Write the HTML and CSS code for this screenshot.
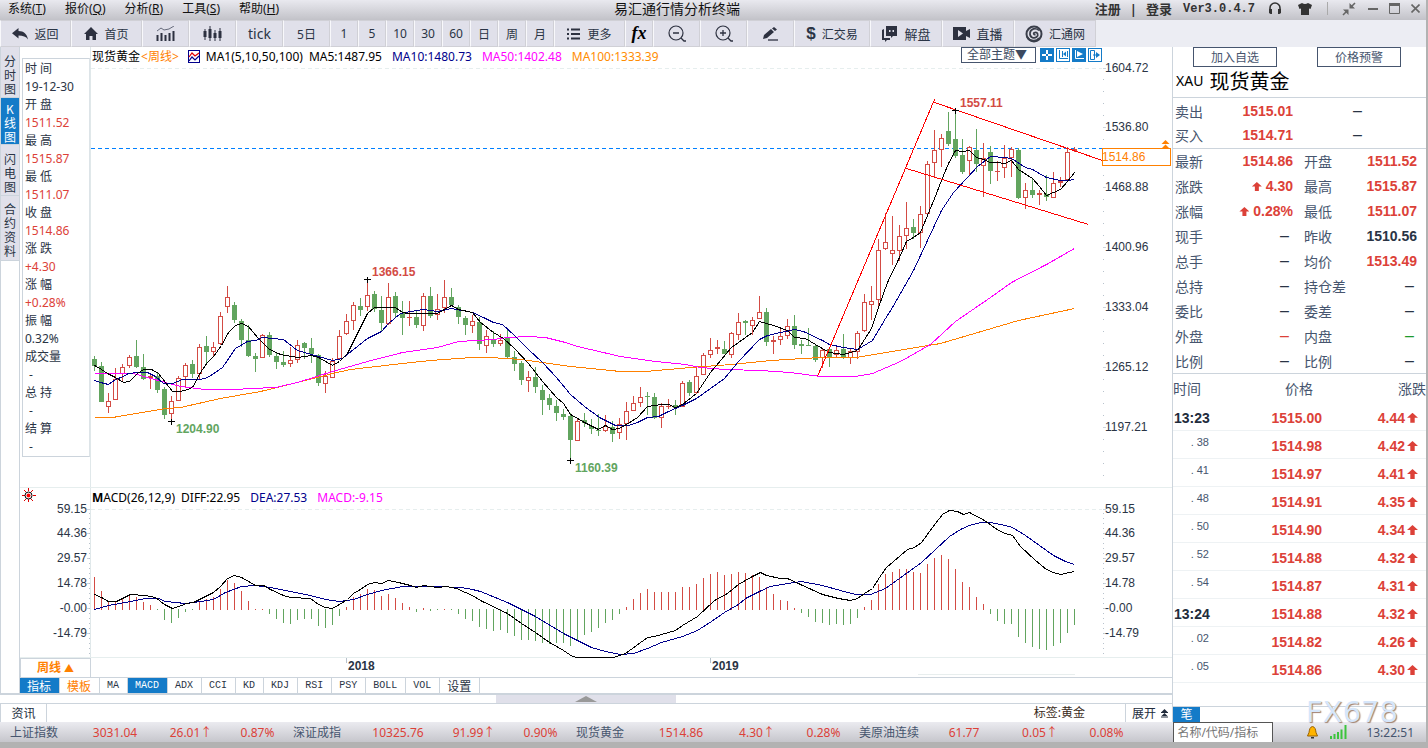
FILE: index.html
```html
<!DOCTYPE html>
<html lang="zh-CN">
<head>
<meta charset="utf-8">
<title>易汇通行情分析终端</title>
<link rel="stylesheet" href="styles.css">
</head>
<body>
<div class="app">
  <header class="titlebar">
    <nav class="menu">
      <button type="button">系统(<u>T</u>)</button>
      <button type="button">报价(<u>Q</u>)</button>
      <button type="button">分析(<u>R</u>)</button>
      <button type="button">工具(<u>S</u>)</button>
      <button type="button">帮助(<u>H</u>)</button>
    </nav>
    <h1>易汇通行情分析终端</h1>
    <div class="account">
      <a href="#">注册</a><span class="bar">|</span><a href="#">登录</a><span class="version">Ver3.0.4.7</span>
      <button type="button" aria-label="客服"><svg width="14" height="13" viewBox="0 0 14 13"><path d="M2 10V6a5 5 0 0 1 10 0v4" fill="none" stroke="#333" stroke-width="1.6"/><path d="M1 7h3v5H2.500L1 11zM13 7h-3v5h1.500l1.500-1z" fill="#333"/></svg></button>
      <button type="button" class="shirt" aria-label="皮肤"><svg width="14" height="12" viewBox="0 0 14 12"><path d="M4 0q3 2 6 0l4 2-1.500 4-1.500-.5V12H3V5.500L1.500 6 0 2z" fill="#333"/></svg></button>
      <i class="split"></i>
      <button type="button" class="shrink" aria-label="收起"><svg width="14" height="14" viewBox="0 0 14 14"><path d="M13 1 9 5M1 13l4-4" stroke="#666" stroke-width="1.600"/><path d="M7.500 1v5.500H13zM6.500 13V7.500H1z" fill="#666"/></svg></button>
      <button type="button" aria-label="最小化"><svg width="10" height="10" viewBox="0 0 10 10"><path d="M0 5h10" stroke="#666" stroke-width="2"/></svg></button>
      <button type="button" aria-label="最大化"><svg width="11" height="11" viewBox="0 0 11 11"><path d="M0 1.500h11" stroke="#666" stroke-width="3"/><path d="M.5 1v9.500h10V1" fill="none" stroke="#666"/></svg></button>
      <button type="button" aria-label="关闭"><svg width="9" height="9" viewBox="0 0 9 9"><path d="m.5.5 8 8m0-8-8 8" stroke="#666" stroke-width="1.600"/></svg></button>
    </div>
  </header>

  <div class="toolbar">
    <button type="button" class="w71"><svg width="16" height="12" viewBox="0 0 16 12"><path d="M6.500 0v3C12 3 15 6 16 11.500 14 8.500 11 7.500 6.500 7.500v3L0 5.200z" fill="#2d3140"/></svg>返回</button>
    <button type="button" class="w71"><svg width="14" height="13" viewBox="0 0 14 13"><path d="m7 0 7 7h-2v6H8.500V9h-3v4H2V7H0z" fill="#2d3140"/></svg>首页</button>
    <button type="button" class="w47" aria-label="走势"><svg width="19" height="16" viewBox="0 0 19 16"><path d="m1 5 4-3 3 2 5-1 5-3" fill="none" stroke="#666b7c"/><path d="M1.500 9v6M5.500 7v8M9.500 9v6M13.500 7v8M17.500 5v10" stroke="#2d3140" stroke-width="2"/></svg></button>
    <button type="button" class="w47" aria-label="K线"><svg width="19" height="16" viewBox="0 0 19 16"><path d="M2 3v11M7 0v15M12 4v11M17 2v13" stroke="#2d3140"/><path d="M.5 5h3v6h-3zM5.500 3h3v9h-3zM10.500 7h3v5h-3zM15.500 5h3v7h-3z" fill="#2d3140"/></svg></button>
    <button type="button" class="w47 tick">tick</button>
    <button type="button" class="w47">5日</button>
    <button type="button" class="w28">1</button>
    <button type="button" class="w28">5</button>
    <button type="button" class="w28">10</button>
    <button type="button" class="w28">30</button>
    <button type="button" class="w28">60</button>
    <button type="button" class="w28">日</button>
    <button type="button" class="w28">周</button>
    <button type="button" class="w28">月</button>
    <button type="button" class="w71 wide"><svg width="13" height="12" viewBox="0 0 13 12"><path d="M0 1.500h2M4 1.500h9M0 6h2M4 6h9M0 10.500h2M4 10.500h9" stroke="#2d3140" stroke-width="2"/></svg>更多</button>
    <button type="button" class="w28 fx">fx</button>
    <button type="button" class="w47" aria-label="缩小"><svg width="18" height="18" viewBox="0 0 18 18"><circle cx="8" cy="8" r="7" fill="none" stroke="#2d3140" stroke-width="1.200"/><path d="M5 8h6M13 13l3 3h2" fill="none" stroke="#2d3140" stroke-width="1.300"/></svg></button>
    <button type="button" class="w47" aria-label="放大"><svg width="18" height="18" viewBox="0 0 18 18"><circle cx="8" cy="8" r="7" fill="none" stroke="#2d3140" stroke-width="1.200"/><path d="M5 8h6M8 5v6M13 13l3 3h2" fill="none" stroke="#2d3140" stroke-width="1.300"/></svg></button>
    <button type="button" class="w47" aria-label="画线"><svg width="17" height="14" viewBox="0 0 17 14"><path d="m1 12 1-4 7-6 3 3-7 6zM10 1.500 12 0l3 2.500L13 4z" fill="#2d3140"/><path d="M6 13h10" stroke="#2d3140" stroke-width="1.300"/></svg></button>
    <button type="button" class="w76"><b class="dollar">$</b>汇交易</button>
    <button type="button" class="w72"><svg width="17" height="16" viewBox="0 0 17 16"><path d="M5 0h11v10h-4l-2 2V10H5z" fill="#2d3140"/><path d="M3 3v9h6v2H6l-2 2v-2H1V4z" fill="#2d3140"/><path d="M8 4h1.500v2H8zM11.500 4H13v2h-1.500z" fill="#e0e0ea"/></svg>解盘</button>
    <button type="button" class="w72"><svg width="17" height="13" viewBox="0 0 17 13"><path d="M0 0h13v4l4-2v9l-4-2v4H0z" fill="#2d3140"/><path d="m5 3 5 3.500L5 10z" fill="#e0e0ea"/></svg>直播</button>
    <button type="button" class="w82"><svg width="18" height="18" viewBox="0 0 18 18"><circle cx="9" cy="9" r="7.500" fill="none" stroke="#3a3e4a" stroke-width="2"/><path d="M14 5.500C11 2.500 5.500 3.500 5 8s4 6 6.500 4 1-5-1.500-4.500-1 2.500.5 2M2 12c3 4.500 9.500 5 12 1" fill="none" stroke="#3a3e4a" stroke-width="1.700"/></svg>汇通网</button>
  </div>

  <main class="main">
    <div class="left">
      <div class="work">
        <nav class="views">
          <button type="button">分<br>时<br>图</button>
          <button type="button" class="on">K<br>线<br>图</button>
          <button type="button">闪<br>电<br>图</button>
          <button type="button" class="long">合<br>约<br>资<br>料</button>
        </nav>
        <div class="desk">
          <section class="pane">
            <div class="gutter">
              <dl class="info">
                <dt>时 间</dt><dd>19-12-30</dd>
                <dt>开 盘</dt><dd class="up">1511.52</dd>
                <dt>最 高</dt><dd class="up">1515.87</dd>
                <dt>最 低</dt><dd class="up">1511.07</dd>
                <dt>收 盘</dt><dd class="up">1514.86</dd>
                <dt>涨 跌</dt><dd class="up">+4.30</dd>
                <dt>涨 幅</dt><dd class="up">+0.28%</dd>
                <dt>振 幅</dt><dd>0.32%</dd>
                <dt>成交量</dt><dd class="none">-</dd>
                <dt>总 持</dt><dd class="none">-</dd>
                <dt>结 算</dt><dd class="none">-</dd>
              </dl>
            </div>
            <div class="plot">
              <div class="legend">
                <span class="name">现货黄金<em>&lt;周线&gt;</em></span>
                <svg class="mark" width="12" height="13" viewBox="0 0 12 13"><rect x=".5" y=".5" width="11" height="12" fill="#fff" stroke="#00008b"/><path d="m1 7 3-4 3 3 4-3" fill="none" stroke="#e00000" stroke-width="1.200"/><path d="m1 11 3-4 3 3 4-4" fill="none" stroke="#00008b" stroke-width="1.200"/></svg>
                <span>MA1(5,10,50,100)</span><span class="first">MA5:1487.95</span><span class="navy">MA10:1480.73</span><span class="pink">MA50:1402.48</span><span class="amber">MA100:1333.39</span>
                <div class="themes">
                  <select aria-label="主题"><option>全部主题▼</option></select>
                  <button type="button" class="solid" aria-label="十字"><svg viewBox="0 0 12 12"><path d="M6 1v4M6 7v4M1 6h4M7 6h4" stroke="#fff" stroke-width="2"/></svg></button>
                  <button type="button" aria-label="压缩"><svg viewBox="0 0 12 12"><path d="M2.500 1v8.500H11M5.500 2v6M10.500 2v6" fill="none" stroke="#147bc8"/><path d="m6 5 3-2.500v5z" fill="#147bc8"/></svg></button>
                  <button type="button" class="solid" aria-label="播放"><svg viewBox="0 0 12 12"><path d="M2.500 1v8.500H11" fill="none" stroke="#fff"/><path d="m4 2 6 3-6 3z" fill="#fff"/></svg></button>
                  <button type="button" aria-label="导出"><svg viewBox="0 0 12 12"><path d="M1.500 1.500h4v9h-4zM4 6h6" fill="none" stroke="#147bc8"/><path d="m7 3 4 3-4 3z" fill="#147bc8"/></svg></button>
                </div>
              </div>
              <svg class="price" viewBox="91 67 1081 420" preserveAspectRatio="xMinYMin meet" id="price"></svg>
            </div>
          </section>
          <section class="pane">
            <div class="gutter">
              <svg class="axis" width="70" height="170" viewBox="20 488 70 170" id="leftAxis">
                <g stroke="#e00000"><path d="M28.500 488v3M28.500 499v3M22 495.500h3M33 495.500h3M24 490l2 2M33 490l-2 2M24 501l2-2M33 501l-2-2"/></g>
                <circle cx="28.500" cy="495.500" r="3.500" fill="#fff" stroke="#000"/><circle cx="28.500" cy="495.500" r="2" fill="#f00"/>
              </svg>
            </div>
            <div class="plot">
              <div class="legend">
                <span><b>M</b>ACD(26,12,9)</span><span class="first">DIFF:22.95</span><span class="navy">DEA:27.53</span><span class="pink">MACD:-9.15</span>
              </div>
              <svg class="macd" viewBox="91 508 1081 149" preserveAspectRatio="xMinYMin meet" id="macd"></svg>
            </div>
          </section>
          <div class="timeline">
            <button type="button" class="period">周线 <span>▲</span></button>
            <svg class="years" viewBox="91 659 1081 19" preserveAspectRatio="xMinYMin meet">
              <path d="M346.500 659v5M710.500 659v5" stroke="#b8c2cc"/><path d="M918 675.500h157" stroke="#e8eeee"/>
              <text x="348" y="671">2018</text><text x="712" y="671">2019</text>
            </svg>
          </div>
          <div class="indicators">
            <button type="button" class="cn on">指标</button><button type="button" class="cn tpl">模板</button><button type="button">MA</button><button type="button" class="on">MACD</button><button type="button">ADX</button><button type="button">CCI</button><button type="button">KD</button><button type="button">KDJ</button><button type="button">RSI</button><button type="button">PSY</button><button type="button">BOLL</button><button type="button">VOL</button><button type="button" class="cn">设置</button>
          </div>
        </div>
      </div>
      <div class="drawer"><button type="button" aria-label="展开面板"><svg width="22" height="6" viewBox="0 0 22 6"><path d="M0 6 11 0l11 6z" fill="#999"/></svg></button></div>
      <div class="news">
        <button type="button" class="tab">资讯</button>
        <span class="tag">标签:黄金</span>
        <button type="button" class="expand">展开 <svg width="7" height="9" viewBox="0 0 7 9"><path d="m3.500 0 3 3h-6zM3.500 4l3 3h-6zM0 3h7v1H0zM0 7.500h7v1H0z" fill="#222c3c"/></svg></button>
      </div>
    </div>

    <aside class="quote">
      <div class="actions"><button type="button">加入自选</button><button type="button">价格预警</button></div>
      <h2><small>XAU</small>现货黄金</h2>
      <table class="facts offer">
        <tr><th>卖出</th><td class="up">1515.01</td><td class="dash">–</td></tr>
        <tr><th>买入</th><td class="up">1514.71</td><td class="dash">–</td></tr>
      </table>
      <table class="facts">
        <tr><th>最新</th><td class="up">1514.86</td><th>开盘</th><td class="up">1511.52</td></tr>
        <tr><th>涨跌</th><td class="up"><i class="arrow"></i> 4.30</td><th>最高</th><td class="up">1515.87</td></tr>
        <tr><th>涨幅</th><td class="up"><i class="arrow"></i> 0.28%</td><th>最低</th><td class="up">1511.07</td></tr>
        <tr><th>现手</th><td class="dash">–</td><th>昨收</th><td>1510.56</td></tr>
        <tr><th>总手</th><td class="dash">–</td><th>均价</th><td class="up">1513.49</td></tr>
        <tr><th>总持</th><td class="dash">–</td><th>持仓差</th><td class="dash">–</td></tr>
        <tr><th>委比</th><td class="dash">–</td><th>委差</th><td class="dash">–</td></tr>
        <tr><th>外盘</th><td class="dash up">–</td><th>内盘</th><td class="dash down">–</td></tr>
        <tr><th>比例</th><td class="dash">–</td><th>比例</th><td class="dash">–</td></tr>
      </table>
      <table class="ticks">
        <thead><tr><th>时间</th><th>价格</th><th>涨跌</th></tr></thead>
        <tbody>
          <tr><td class="minute">13:23</td><td>1515.00</td><td>4.44<i class="arrow"></i></td></tr>
          <tr><td>. 38</td><td>1514.98</td><td>4.42<i class="arrow"></i></td></tr>
          <tr><td>. 41</td><td>1514.97</td><td>4.41<i class="arrow"></i></td></tr>
          <tr><td>. 48</td><td>1514.91</td><td>4.35<i class="arrow"></i></td></tr>
          <tr><td>. 50</td><td>1514.90</td><td>4.34<i class="arrow"></i></td></tr>
          <tr><td>. 52</td><td>1514.88</td><td>4.32<i class="arrow"></i></td></tr>
          <tr><td>. 54</td><td>1514.87</td><td>4.31<i class="arrow"></i></td></tr>
          <tr><td class="minute">13:24</td><td>1514.88</td><td>4.32<i class="arrow"></i></td></tr>
          <tr><td>. 02</td><td>1514.82</td><td>4.26<i class="arrow"></i></td></tr>
          <tr><td>. 05</td><td>1514.86</td><td>4.30<i class="arrow"></i></td></tr>
        </tbody>
      </table>
      <div class="foot"><button type="button">笔</button></div>
      <div class="brand">FX678</div>
    </aside>
  </main>

  <footer class="status">
    <div class="item"><span>上证指数</span><b>3031.04</b><b>26.01↑</b><b>0.87%</b></div>
    <div class="item"><span>深证成指</span><b>10325.76</b><b>91.99↑</b><b>0.90%</b></div>
    <div class="item"><span>现货黄金</span><b>1514.86</b><b>4.30↑</b><b>0.28%</b></div>
    <div class="item"><span>美原油连续</span><b>61.77</b><b>0.05↑</b><b>0.08%</b></div>
    <div class="tools">
      <input type="text" placeholder="名称/代码/指标" aria-label="名称/代码/指标">
      <svg class="bell" width="11" height="13" viewBox="0 0 11 13"><path d="M5.500.5C8 1 8.500 3 9 6.500L10.500 10h-10L2 6.500C2.500 3 3 1 5.500.5z" fill="#ffb400" stroke="#9a6200"/><path d="M4 11h3v1.500H4z" fill="#333"/></svg>
      <svg width="18" height="14" viewBox="0 0 18 14"><path d="M1 11v3M4.500 9v5M8 7v7M11.500 4.500V14M15.500 0v14" stroke="#3cc43c" stroke-width="2"/></svg>
      <time>13:22:51</time>
    </div>
  </footer>
</div>
<script src="chart.js"></script>
</body>
</html>
```
FILE: styles.css
```css
* { box-sizing: border-box; }
body { margin: 0; background: #fff; color: #2a3445; font: 12px "Noto Sans", "Noto Sans CJK SC", sans-serif; }
button, input, select { margin: 0; padding: 0; border: 0; background: none; color: inherit; font: inherit; }
svg { display: block; }
table { border-collapse: collapse; }
a { color: inherit; text-decoration: none; }

.app { display: flex; flex-direction: column; min-height: 100vh; border-right: 2px solid #b2b2b2; border-bottom: 6px solid #b2b2b2; }

.titlebar { display: flex; align-items: center; height: 20px; padding: 0 6px 3px 8px; background: linear-gradient(#e9e9ef, #c2c2c8); color: #111; }
.menu { display: flex; gap: 19px; }
.menu button { line-height: 16px; }
.titlebar h1 { flex: 1; margin: 0; font: 14px/16px "Liberation Sans", "Noto Sans CJK SC", sans-serif; text-align: center; }
.account { display: flex; align-items: center; gap: 11px; padding-left: 20px; color: #333; font-size: 13px; font-weight: bold; line-height: 16px; }
.account .version { font: bold 12px/16px "Liberation Mono", monospace; padding-right: 2px; }
.account .bar { margin: 0 -2px; }
.account .shirt { padding-left: 5px; }
.account .split { width: 1px; height: 13px; margin: 0 3px 0 4px; background: #aaa; }
.account .shrink { padding-right: 1px; }

.toolbar { display: flex; height: 27px; background: #ecedf3; }
.toolbar button { display: flex; align-items: center; justify-content: center; gap: 6px; border: 1px solid #d0d0d6; border-left-color: #f8f8fb; background: #e0e0ea; font: 12px "Noto Sans", "Noto Sans CJK SC", sans-serif; }
.toolbar .w28 { width: 28px; }
.toolbar .w47 { width: 47px; }
.toolbar .w71 { width: 71px; }
.toolbar .w72 { width: 72px; font-size: 13px; }
.toolbar .w76 { width: 76px; }
.toolbar .w82 { width: 82px; }
.toolbar .wide { gap: 7px; }
.toolbar .tick { font-size: 14px; }
.toolbar .fx { font: italic bold 18px "Liberation Serif", serif; color: #000; }
.toolbar .dollar { font: bold 17px "Liberation Sans", sans-serif; }

.main { display: flex; flex: 1; align-items: stretch; }
.left { display: flex; flex: 1; flex-direction: column; min-width: 0; }
.work { display: flex; flex: 1; border-bottom: 2px solid #ccd4dc; }
.views { display: flex; flex-direction: column; width: 20px; border-left: 1px solid #ccd4dc; border-right: 1px solid #ccd4dc; }
.views button { padding: 7px 0 1px; border-bottom: 1px solid #ccd4dc; background: #e0e0ea; font: 12px/14px "Noto Sans CJK SC", sans-serif; }
.views .on { padding: 4px 0 0; background: #147bc8; color: #fff; }
.views .long { padding: 6px 0 2px; }
.desk { display: flex; flex: 1; flex-direction: column; min-width: 0; }
.pane { display: flex; border-bottom: 1px solid #e6eeee; }
.gutter { width: 71px; border-right: 1px solid #e0e8ea; }
.plot { flex: 1; min-width: 0; }
.info { margin: 11px 0 0 2px; padding: 1px 0 0 2px; border: 1px solid #ccd4dc; border-right-color: #dde4e8; line-height: 18px; }
.info dt, .info dd { margin: 0; }
.info .none { padding-left: 4px; }
.up { color: #dc4138; }
.down { color: #1f9a2d; }

.legend { display: flex; align-items: center; gap: 10px; height: 20px; padding: 0 0 2px 1px; color: #000; white-space: nowrap; }
.legend em { font-style: normal; color: #ff8000; padding-left: 1px; }
.legend .mark { margin-left: -1px; margin-right: -4px; }
.legend .first { margin-left: -4px; }
.legend .navy { color: #00008b; }
.legend .pink { color: #f0f; }
.legend .amber { color: #ff8c00; }
.themes { display: flex; gap: 2px; margin-left: auto; padding-right: 70px; align-self: flex-start; }
.themes select { appearance: none; width: 75px; height: 16px; margin-right: 2px; padding-left: 5px; border: 1px solid #46556e; color: #3c4a60; line-height: 14px; }
.themes button { width: 14px; height: 14px; margin-top: 1px; border: 1px solid #147bc8; }
.themes .solid { background: #147bc8; }
.themes svg { width: 12px; height: 12px; }
.price { width: 100%; height: 420px; overflow: visible; }
.macd { width: 100%; height: 149px; overflow: visible; }
.axis { margin-bottom: -1px; overflow: visible; }
svg text { font: 12px "Liberation Sans", sans-serif; fill: #2a3445; }
svg text.peak { font-weight: bold; fill: #d34b44; }
svg text.low { font-weight: bold; fill: #62a55f; }
svg text.now { fill: #ff8000; }
.lines polyline, .lines line { fill: none; shape-rendering: crispEdges; }

.timeline { display: flex; height: 20px; border-bottom: 1px solid #ccd4dc; }
.period { width: 71px; border: 1px solid #ccd4dc; border-bottom: 0; color: #ff8000; font-size: 12px; font-weight: bold; line-height: 18px; }
.period span { font-size: 10px; }
.years { flex: 1; height: 19px; }
.years text { font-weight: bold; }
.indicators { display: flex; height: 15px; }
.indicators button { padding: 1px 8px 0 7px; border-right: 1px solid #ccd4dc; font: 10px/14px "Liberation Mono", monospace; }
.indicators .cn { padding-top: 0; font: 12px/14px "Noto Sans CJK SC", sans-serif; }
.indicators .on { background: #147bc8; color: #fff; }
.indicators .tpl { color: #ff8000; }

.drawer { display: flex; justify-content: center; height: 9px; border-bottom: 1px solid #ccd4dc; }
.drawer button { display: flex; align-items: center; justify-content: center; width: 180px; background: #e0e0ea; }
.news { display: flex; height: 18px; line-height: 17px; color: #222c3c; }
.news .tab { width: 47px; border-left: 1px solid #ccd4dc; border-right: 1px solid #ccd4dc; }
.news .tag { margin-left: auto; padding-right: 40px; color: #3a2a20; }
.news .expand { display: flex; align-items: center; gap: 5px; padding: 0 4px 0 6px; border-left: 1px solid #ccd4dc; }

.quote { position: relative; display: flex; flex-direction: column; width: 254px; border-left: 1px solid #ccd4dc; }
.actions { display: flex; gap: 40px; padding-left: 20px; }
.actions button { width: 84px; height: 20px; border: 1px solid #46556e; color: #46556e; line-height: 17px; }
.quote h2 { display: flex; align-items: center; gap: 6px; height: 31px; margin: 0; padding: 0 0 3px 3px; border-bottom: 1px solid #ccd4dc; color: #000; font: 20px/27px "Noto Sans CJK SC", sans-serif; }
.quote h2 small { font: 14px "Noto Sans", sans-serif; }
.facts { width: 100%; table-layout: fixed; border-bottom: 1px solid #ccd4dc; font: bold 14px "Liberation Sans", sans-serif; }
.facts tr { height: 25px; }
.facts th { width: 51px; padding: 0 0 0 2px; color: #46556e; font: 14px/20px "Noto Sans CJK SC", sans-serif; text-align: left; white-space: nowrap; }
.facts th ~ th { padding-left: 11px; width: 63px; }
.facts td { padding: 0; text-align: right; line-height: 20px; }
.facts th + td { width: 69px; }
.facts th ~ th + td { width: auto; padding-right: 9px; }
.facts .dash, .facts th ~ th + td.dash { padding-right: 12px; font: 16px/20px "Liberation Sans", sans-serif; }
.facts th + td.dash { padding-right: 4px; }
.facts.offer td.dash { padding-right: 64px; }
.arrow { display: inline-block; width: 10px; height: 9px; background: currentColor; clip-path: polygon(50% 0, 100% 50%, 70% 50%, 70% 100%, 30% 100%, 30% 50%, 0 50%); }
.ticks { width: 100%; table-layout: fixed; color: #dc4138; font: bold 14px "Liberation Sans", sans-serif; }
.ticks tr { height: 28px; border-bottom: 1px solid #eef2f4; }
.ticks thead tr { border-bottom: 0; }
.ticks th { padding: 0; color: #46556e; font: 14px/20px "Noto Sans CJK SC", sans-serif; text-align: left; }
.ticks th:nth-child(2) { width: 139px; padding-left: 53px; }
.ticks th:first-child { width: 59px; }
.ticks th:last-child { text-align: right; }
.ticks td { padding: 4px 0 0; text-align: right; line-height: 20px; }
.ticks td:first-child { padding: 0 23px 4px 0; color: #46556e; font: 11px "Liberation Sans", sans-serif; }
.ticks td.minute:first-child { padding: 4px 0 0 1px; color: #222c3c; font: bold 14px/20px "Liberation Sans", sans-serif; text-align: left; }
.ticks td:nth-child(2) { padding-right: 49px; }
.ticks td:last-child { padding-right: 8px; }
.ticks .arrow { width: 11px; height: 10px; margin-left: 2px; }
.foot { display: flex; height: 16px; margin-top: auto; border-top: 1px solid #ccd4dc; }
.foot button { width: 27px; background: #147bc8; color: #fff; line-height: 14px; }
.brand { position: absolute; right: 28px; bottom: -4px; color: #d6e6fa; font: 29px/27px "DejaVu Sans", sans-serif; text-shadow: 1px 1px 1px #a08070; }

.status { display: flex; height: 20px; background: linear-gradient(#ebebf0, #c6c6cc); line-height: 21px; }
.item { display: grid; grid-template-columns: 70px 70px 82px 51px; padding-left: 10px; color: #46556e; white-space: nowrap; }
.item b { color: #dc4138; font-weight: normal; text-align: center; }
.tools { display: flex; flex: 1; align-items: center; margin-left: auto; padding-right: 12px; justify-content: flex-end; }
.tools input { width: 100px; height: 20px; margin-right: 34px; padding-left: 3px; border: 1px solid #555; border-bottom: 0; background: #fff; }
.tools input::placeholder { color: #777; }
.tools .bell { margin-right: 12px; }
.tools time { margin-left: 18px; color: #46556e; }
```
FILE: chart.js
```javascript
const RED = '#d34b44', GREEN = '#62a55f', STEP = 7, X0 = 94;

// Weekly bars as [colour, high, body top, body bottom, low] in plot units.
const bars = `g356,359,366,371 g362,366,402,402 r393,401,407,413 r368,379,400,400 r364,367,374,382 r355,357,366,368 g340,356,367,368 g354,367,379,380 r373,376,378,389 g373,376,390,393
g387,389,415,419 r396,401,414,420 r376,378,401,401 r363,365,377,387 g360,364,374,378 r344,347,374,380 g336,346,352,365 r342,347,352,357 r312,316,344,345 r286,297,307,313
g302,305,320,323 g319,321,340,347 g325,340,356,357 g353,356,359,372 r334,335,358,358 g332,335,355,357 g353,356,362,369 g351,362,365,367 r347,360,364,367 r340,345,360,363
g342,343,348,359 g338,348,354,363 g354,355,383,386 r371,376,384,393 r358,361,378,378 r330,336,359,360 r314,321,334,335 r302,305,321,330 g298,306,310,316 r281,295,307,311
g291,294,309,312 g296,310,323,331 r283,297,324,325 g292,296,313,318 g301,313,318,335 r301,317,318,326 g311,317,325,328 r293,296,326,331 g287,296,316,318 r294,309,315,320
r280,297,308,313 g288,297,305,305 g305,307,317,324 g316,318,325,335 r315,321,326,333 g317,322,344,350 r330,336,346,353 g331,339,344,347 r334,340,344,346 g328,337,357,358
g351,357,364,371 g361,363,380,385 r371,377,381,392 g367,377,387,393 g385,390,400,415 g394,398,405,410 g400,406,413,421 g409,414,417,420 g413,416,440,459 r418,421,441,441
g413,420,423,427 g419,426,429,434 g414,430,431,436 r415,426,431,432 g421,427,434,442 r418,424,433,439 r402,411,424,440 r396,403,411,411 r387,397,403,407 g392,396,397,415
g393,397,418,419 r403,406,418,428 r399,406,407,409 g400,405,408,415 r381,383,407,407 g380,382,393,396 r366,376,393,394 r353,355,375,375 r338,350,355,358 r340,347,349,354
g341,349,354,354 r332,333,355,358 r313,322,335,340 g320,321,323,335 r317,320,326,335 r296,312,319,319 g308,312,342,346 r336,340,342,354 r327,336,340,345 r319,326,336,339
g315,326,345,349 g340,344,346,354 g328,345,346,346 g345,346,360,362 r348,350,358,368 g348,349,358,367 r345,350,355,358 g334,349,358,359 r349,351,358,364 r331,333,352,359
r294,302,331,332 r286,301,305,320 r239,250,300,306 r213,242,249,250 r216,250,254,265 r225,236,251,261 r202,228,236,249 g219,227,233,239 r206,214,233,248 r161,164,214,215
r130,150,163,178 r134,138,150,167 g112,131,144,146 g111,139,156,158 g139,155,172,174 r146,147,161,175 g129,150,164,172 r143,158,166,197 g146,152,171,184 r161,171,172,181
r145,158,168,178 r147,149,158,177 g148,150,198,199 r183,190,198,209 g179,190,195,198 r190,193,195,205 g175,194,197,201 r172,183,198,198 r177,181,183,187 r147,152,180,181 r147,149,151,152`.split(/\s+/);

const ma5 = '94,365 101,369 107,373 115,377 123,382 129,381 137,373 143,369 151,369 158,373 165,382 172,391 180,391 187,389 192,387 200,372 207,362 213,356 221,345 228,332 235,325 241,323 248,326 257,337 263,343 269,349 280,354 297,357 311,355 318,357 327,362 332,365 339,361 347,353 353,341 360,327 367,313 374,307 395,307 402,312 408,313 437,313 444,309 451,305 458,309 472,312 480,322 493,332 503,338 514,348 528,363 542,381 556,397 563,403 570,414 577,418 584,422 598,429 605,425 612,429 619,428 626,424 637,417 647,406 661,404 668,404 675,407 682,404 696,393 710,372 731,347 752,332 759,321 773,325 787,330 794,337 805,338 820,347 829,352 843,354 857,350 871,328 878,307 887,282 899,257 906,241 913,237 920,232 927,215 934,198 941,180 948,163 955,150 962,151 969,150 976,157 983,159 990,162 997,162 1004,163 1011,160 1018,169 1032,178 1039,186 1046,195 1060,189 1067,181 1074,172';
const ma10 = '94,380 100,382 108,384 115,379 123,376 128,373 137,372 147,372 155,376 163,383 172,383 182,379 198,379 205,378 212,374 222,367 235,348 247,341 255,340 262,337 283,339 297,350 311,354 332,360 342,358 348,353 367,338 381,331 388,323 400,313 410,311 423,309 437,311 451,308 472,312 483,317 493,322 502,324 514,335 528,349 542,362 556,377 570,394 584,406 599,417 605,420 615,425 628,425 637,422 647,417 658,416 668,411 682,405 696,398 724,378 738,361 759,339 767,335 780,332 794,329 803,331 822,340 829,344 843,347 857,349 872,340 885,318 892,307 913,270 927,240 941,210 953,192 967,177 977,166 990,156 1004,157 1011,158 1025,167 1032,169 1046,177 1060,180 1067,180 1074,179';
const ma50 = '94,373 133,373 147,377 165,382 180,386 205,389 235,389 250,388 275,387 297,382 332,371 367,361 402,352 437,347 458,341 493,339 507,337 528,336 545,337 565,342 577,346 590,349 620,356 655,361 685,364 700,367 725,369 760,370 790,372 820,376 855,376 872,373 900,361 930,344 955,321 990,297 1011,282 1046,264 1074,248';
const ma100 = '94,417 112,417 130,414 165,408 180,407 220,398 260,391 297,382 332,373 350,369 402,363 430,360 472,357 490,357 521,359 570,366 600,369 620,371 645,371 690,367 731,364 770,360 820,357 855,357 880,353 910,348 940,343 1018,320 1046,314 1074,308';
const diff = '94,594 101,597 108,601 116,601 124,597 130,594 145,595 155,597 164,604 172,608 181,605 186,603 193,602 205,596 213,592 220,586 227,578 234,575 241,577 248,581 255,585 263,585 270,589 283,595 290,597 310,598 318,604 325,607 332,608 339,604 347,599 353,593 360,589 367,584 374,582 381,583 388,580 398,582 410,585 416,587 423,585 437,587 446,586 456,588 465,592 472,595 480,600 507,613 521,623 535,632 549,642 563,650 572,656 577,657 613,657 625,653 647,637 654,636 675,630 682,625 697,616 714,600 727,593 738,584 752,576 760,572 766,575 780,578 787,578 800,584 822,594 838,598 850,600 857,598 864,593 872,588 879,577 886,567 900,555 907,549 914,547 921,542 935,523 942,514 949,510 957,511 963,514 969,512 984,520 998,530 1005,533 1012,535 1020,546 1035,560 1046,569 1053,572 1060,574 1074,571';
const dea = '94,609 108,605 130,601 145,598 158,598 165,601 185,603 200,601 213,599 225,592 241,586 255,585 270,587 290,591 310,595 325,599 339,601 353,599 367,594 381,590 402,586 437,586 460,587 472,589 480,591 507,602 535,616 563,633 591,647 605,651 620,654 633,653 647,648 661,642 682,636 697,630 711,621 724,612 738,604 745,598 759,591 770,586 787,583 801,581 822,585 840,590 855,594 870,594 885,588 910,570 921,562 935,549 949,536 960,529 969,525 980,522 990,522 1005,525 1012,527 1025,535 1039,545 1053,555 1065,561 1074,564';

// Signed histogram heights, in thirds of a unit.
const histogram = [98,58,28,26,36,43,38,25,16,-4,-32,-41,-26,-8,-2,25,34,40,63,91,82,58,28,4,4,-14,-29,-41,-44,-32,-29,-29,-50,-56,-47,-20,10,40,49,64,61,43,49,37,22,10,-8,7,-5,-4,4,-2,-14,-29,-35,-53,-59,-65,-62,-72,-80,-92,-92,-95,-101,-104,-102,-101,-110,-92,-77,-68,-56,-41,-32,-14,10,34,52,64,55,55,55,55,70,70,79,97,109,115,106,109,115,112,105,100,70,49,31,28,7,-11,-23,-38,-41,-47,-44,-47,-44,-26,10,31,79,109,115,124,124,115,112,139,157,166,154,124,85,70,40,19,-14,-35,-44,-44,-83,-101,-113,-119,-122,-110,-101,-71,-47];

const rule = (x1, y1, x2, y2, color, extra = '') => `<line x1="${x1}" y1="${y1}" x2="${x2}" y2="${y2}" stroke="${color}" ${extra}/>`;
const path = (points, color) => `<polyline points="${points}" stroke="${color}" transform="translate(.5 .5)"/>`;
const cross = (x, y) => rule(x - 3, y, x + 4, y, '#000') + rule(x + .5, y - 3, x + .5, y + 3, '#000');

let out = rule(91, 68.5, 1102, 68.5, '#e6eeee', 'stroke-dasharray="4 3"');
out += rule(91, 148.5, 1102, 148.5, '#0080ff', 'stroke-dasharray="4 3"');
bars.forEach((bar, i) => {
  const color = bar[0] === 'g' ? GREEN : RED;
  const [high, top, bottom, low] = bar.slice(1).split(',').map(Number);
  const x = X0 + i * STEP;
  out += rule(x + .5, high, x + .5, low, color);
  const hollow = bar[0] === 'r' && bottom - top > 2;
  const height = Math.max(1, bottom - top);
  out += hollow
    ? `<rect x="${x - 1.5}" y="${top + .5}" width="4" height="${height - 1}" fill="#fff" stroke="${color}"/>`
    : `<rect x="${x - 2}" y="${top}" width="5" height="${height}" fill="${color}"/>`;
});
out += path(ma100, '#ff8000') + path(ma50, '#ff00ff') + path(ma10, '#00008b') + path(ma5, '#000');
out += path('817,376 934,99', '#f00') + path('934,102 1102,160', '#f00') + path('906,168 1088,224', '#f00');
out += cross(171, 421.5) + cross(367, 279.5) + cross(570, 460.5) + cross(955, 110.5);
for (let y = 79; y < 480; y += 12) out += rule(1103, y + .5, 1104, y + .5, '#b8c2cc');
const prices = [['1604.72', 68], ['1536.80', 127], ['1468.88', 187], ['1400.96', 247], ['1333.04', 307], ['1265.12', 367], ['1197.21', 427]];
let labels = '';
prices.forEach(([value, y]) => {
  out += rule(1103, y + .5, 1106, y + .5, '#ccd4dc');
  labels += `<text x="1105" y="${y + 4}">${value}</text>`;
});
labels += '<rect x="1102.5" y="148.5" width="68" height="17" fill="#fff" stroke="#ff8000"/><text class="now" x="1102" y="161">1514.86</text>';
labels += '<path d="m1165.500 140 4 4h-8zM1165.500 144.500l4 4h-8z" fill="#ff8000"/>';
labels += '<text class="peak" x="960" y="107">1557.11</text><text class="peak" x="372" y="276">1366.15</text>';
labels += '<text class="low" x="176" y="433">1204.90</text><text class="low" x="575" y="472">1160.39</text>';
document.getElementById('price').innerHTML = `<g class="lines">${out}</g>${labels}`;

out = rule(91, 509.5, 1102, 509.5, '#e6eeee', 'stroke-dasharray="4 3"');
histogram.forEach((value, i) => {
  const x = X0 + i * STEP + .5;
  out += value > 0 ? rule(x, 610 - Math.round(value / 3), x, 610, RED) : rule(x, 609, x, 609 + Math.round(-value / 3), GREEN);
});
out += path(dea, '#00008b') + path(diff, '#000');
labels = '';
let left = '';
[['59.15', 509], ['44.36', 533], ['29.57', 558], ['14.78', 583], ['-0.00', 608], ['-14.79', 633]].forEach(([value, y]) => {
  out += rule(1103, y + .5, 1106, y + .5, '#ccd4dc');
  left += rule(87, y + .5, 90, y + .5, '#ccd4dc') + `<text x="87" y="${y + 4}" text-anchor="end">${value}</text>`;
  labels += `<text x="1105" y="${y + 4}">${value}</text>`;
});
for (let y = 513; y < 656; y += 5) {
  out += rule(1103, y + .5, 1104, y + .5, '#b8c2cc');
  left += rule(89, y + .5, 90, y + .5, '#b8c2cc');
}
document.getElementById('macd').innerHTML = `<g class="lines">${out}</g>${labels}`;
document.getElementById('leftAxis').insertAdjacentHTML('beforeend', left);
```
